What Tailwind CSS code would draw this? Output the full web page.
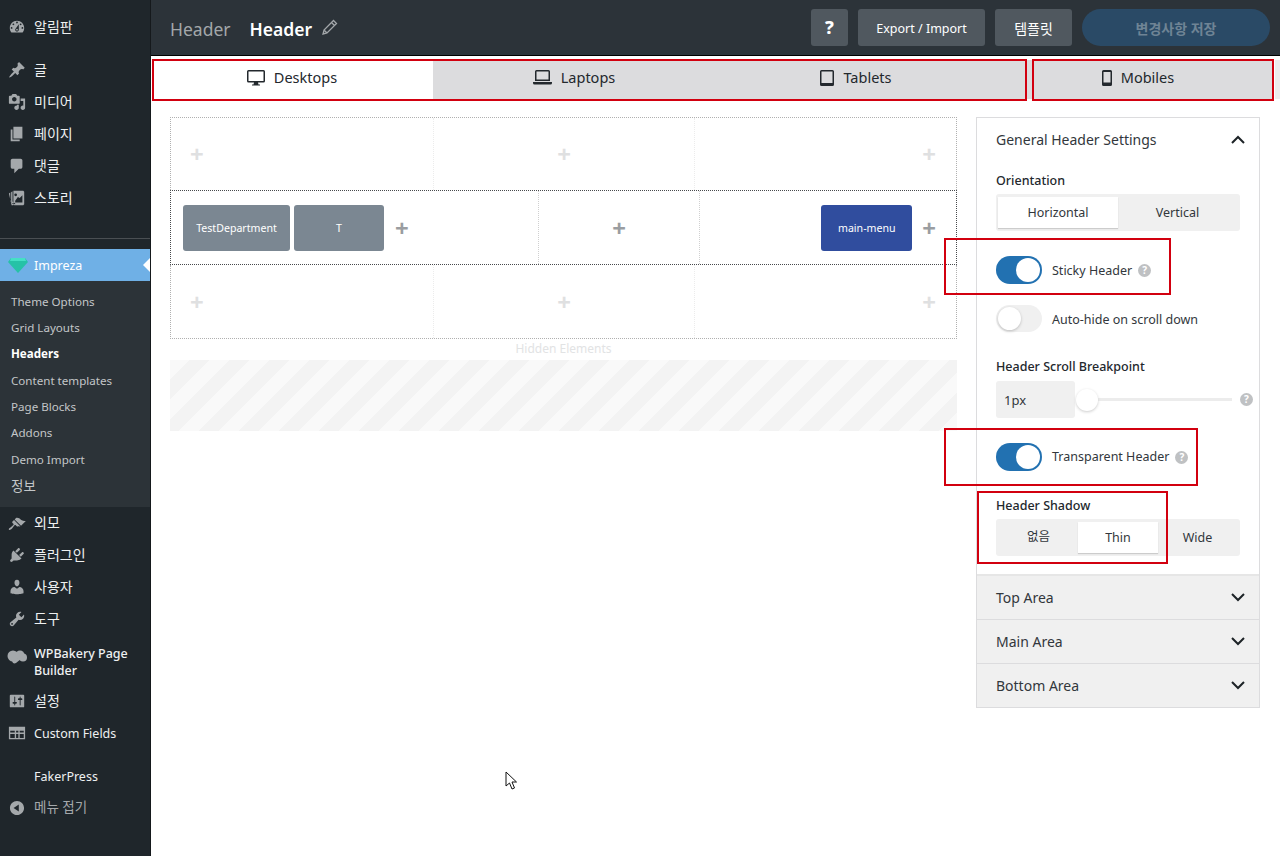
<!DOCTYPE html>
<html lang="ko">
<head>
    <meta charset="UTF-8">
    <title>Header</title>
    <script src="https://cdn.jsdelivr.net/npm/@tailwindcss/browser@4"></script>
</head>
<body class="font-['Noto_Sans','Noto_Sans_CJK_KR',sans-serif] bg-white">
<div class="relative flex w-[1280px] h-[856px] overflow-hidden">

    <!-- admin sidebar -->
    <aside class="w-[150px] shrink-0 bg-[#1f262b] text-[14px] text-[#eef0f1] border-r border-[#15191c] box-content">
        <div class="h-[11px]"></div>
        <a class="flex items-center h-[32px] pl-[8px] gap-[8px]"><svg class="w-[18px] h-[18px] fill-[#a4a8ab]" viewBox="0 0 20 20"><path d="M3.76 16h12.48c1.1-1.37 1.76-3.11 1.76-5 0-4.42-3.58-8-8-8s-8 3.58-8 8c0 1.89.66 3.63 1.76 5zM10 4c.55 0 1 .45 1 1s-.45 1-1 1-1-.45-1-1 .45-1 1-1zM6 6c.55 0 1 .45 1 1s-.45 1-1 1-1-.45-1-1 .45-1 1-1zm8 0c.55 0 1 .45 1 1s-.45 1-1 1-1-.45-1-1 .45-1 1-1zm-5.37 5.55L12 7v6c0 1.1-.9 2-2 2s-2-.9-2-2c0-.57.24-1.08.63-1.45zM4 10c.55 0 1 .45 1 1s-.45 1-1 1-1-.45-1-1 .45-1 1-1zm12 0c.55 0 1 .45 1 1s-.45 1-1 1-1-.45-1-1 .45-1 1-1zm-5 3c0-.55-.45-1-1-1s-1 .45-1 1 .45 1 1 1 1-.45 1-1z"/></svg><span class="pb-[2px]">알림판</span></a>
        <div class="h-[11px]"></div>
        <a class="flex items-center h-[32px] pl-[8px] gap-[8px]"><svg class="w-[18px] h-[18px] fill-[#a4a8ab]" viewBox="0 0 20 20"><path d="M10.44 3.02l1.82-1.82 6.36 6.35-1.83 1.82c-1.05-.68-2.48-.57-3.41.36l-.75.75c-.92.93-1.04 2.35-.35 3.41l-1.83 1.82-2.41-2.41-2.8 2.79c-.42.42-3.38 2.71-3.8 2.29s1.86-3.39 2.28-3.81l2.79-2.79L4.1 9.36l1.83-1.82c1.05.69 2.48.57 3.4-.36l.75-.75c.93-.92 1.05-2.35.36-3.41z"/></svg><span class="pb-[2px]">글</span></a>
        <a class="flex items-center h-[32px] pl-[8px] gap-[8px]"><svg class="w-[18px] h-[18px] fill-[#a4a8ab]" viewBox="0 0 20 20"><path d="M13 11V4c0-.55-.45-1-1-1h-1.67L9 1H5L3.67 3H2c-.55 0-1 .45-1 1v7c0 .55.45 1 1 1h10c.55 0 1-.45 1-1zM7 4.5c1.38 0 2.5 1.12 2.5 2.5S8.38 9.5 7 9.5 4.5 8.38 4.5 7 5.62 4.5 7 4.5zM14 6h5v10.5c0 1.38-1.12 2.5-2.5 2.5S14 17.88 14 16.5s1.12-2.5 2.5-2.5c.17 0 .34.02.5.05V9h-3V6zm-4 8.05V13h2v3.5c0 1.38-1.12 2.5-2.5 2.5S7 17.88 7 16.5 8.12 14 9.5 14c.17 0 .34.02.5.05z"/></svg><span class="pb-[2px]">미디어</span></a>
        <a class="flex items-center h-[32px] pl-[8px] gap-[8px]"><svg class="w-[18px] h-[18px] fill-[#a4a8ab]" viewBox="0 0 20 20"><path d="M6 15V2h10v13H6zm-1 1h8v2H3V5h2v11z"/></svg><span class="pb-[2px]">페이지</span></a>
        <a class="flex items-center h-[32px] pl-[8px] gap-[8px]"><svg class="w-[18px] h-[18px] fill-[#a4a8ab]" viewBox="0 0 20 20"><path d="M5 2h9c1.1 0 2 .9 2 2v7c0 1.1-.9 2-2 2h-2l-5 5v-5H5c-1.1 0-2-.9-2-2V4c0-1.1.9-2 2-2z"/></svg><span class="pb-[2px]">댓글</span></a>
        <a class="flex items-center h-[32px] pl-[8px] gap-[8px]"><svg class="w-[18px] h-[18px] fill-[#a4a8ab]" viewBox="0 0 20 20"><path fill-rule="evenodd" d="M1 5l1.500-1v10L6 16.500V18H4zM3.500 3.500l1.500-1v11.500l3 2v1l-3-.500-1.500-1.500zM6 2h11l1 1v14l-1 1H7l-1-1zM8.500 5a1.500 1.500 0 1 0 0 3 1.500 1.500 0 0 0 0-3zM16 7l-3 3-2-1-3 4v2h8z"/></svg><span class="pb-[2px]">스토리</span></a>

        <div class="h-[24px]"></div>
        <div class="h-px bg-[#4a4f53]"></div>
        <div class="h-[10px]"></div>

        <a class="relative flex items-center h-[32px] pl-[8px] gap-[8px] bg-[#6fb0e6] text-white"><svg class="w-[20px] h-[18px]" viewBox="0 0 20 18"><path d="M3 2h14l3 4-10 11L0 6z" fill="#26c2a7"/><path d="M3 2h14l1 3H2z" fill="#45e0c5"/></svg><span class="-ml-[2px] pt-[2px] text-[12.500px]">Impreza</span><span class="absolute right-0 top-[9px] border-y-[7px] border-y-transparent border-r-[7px] border-r-white"></span></a>
        <div class="bg-[#2c3338] h-[226px] pt-[7px] text-[11.600px] text-[#c3c6c8]">
            <a class="flex items-center h-[26.400px] pl-[11px]">Theme Options</a>
            <a class="flex items-center h-[26.400px] pl-[11px]">Grid Layouts</a>
            <a class="flex items-center h-[26.400px] pl-[11px] font-bold text-white">Headers</a>
            <a class="flex items-center h-[26.400px] pl-[11px]">Content templates</a>
            <a class="flex items-center h-[26.400px] pl-[11px]">Page Blocks</a>
            <a class="flex items-center h-[26.400px] pl-[11px]">Addons</a>
            <a class="flex items-center h-[26.400px] pl-[11px]">Demo Import</a>
            <a class="flex items-center h-[26.400px] pl-[11px] text-[13.500px]">정보</a>
        </div>

        <a class="flex items-center h-[32px] pl-[8px] gap-[8px]"><svg class="w-[18px] h-[18px] fill-[#a4a8ab]" viewBox="0 0 20 20"><path d="M14.480 11.060L7.410 3.990l1.500-1.500c.5-.56 2.300-.47 3.510.32 1.210.8 1.430 1.280 2.910 2.100 1.180.64 2.450 1.260 4.450.85zm-.71.71L6.700 4.700 4.930 6.470c-.39.39-.39 1.020 0 1.410l1.060 1.060c.39.39.39 1.030 0 1.420-.6.6-1.430 1.110-2.210 1.690-.35.26-.7.53-1.010.84C1.430 13.230.4 14.850 1.080 15.530c.68.68 2.300-.35 3.640-1.700.31-.31.58-.66.84-1.010.58-.78 1.090-1.610 1.690-2.210.39-.39 1.020-.39 1.410 0l1.060 1.060c.39.39 1.020.39 1.410 0z" transform="translate(0 2)"/></svg><span class="pb-[2px]">외모</span></a>
        <a class="flex items-center h-[32px] pl-[8px] gap-[8px]"><svg class="w-[18px] h-[18px] fill-[#a4a8ab]" viewBox="0 0 20 20"><path d="M13.110 4.360L9.870 7.600 8 5.730l3.240-3.240c.35-.34 1.050-.2 1.560.32.52.51.66 1.210.31 1.550zm-8 1.770l.91-1.120 9.010 9.010-1.190.84c-.71.71-2.630 1.160-3.820 1.160H6.140L4.900 17.260c-.59.59-1.540.59-2.120 0-.59-.58-.59-1.530 0-2.120l1.240-1.240v-3.880c0-1.130.4-3.190 1.090-3.890zm7.260 3.970l3.240-3.240c.34-.35 1.040-.21 1.550.31.52.51.66 1.210.31 1.550l-3.240 3.250z"/></svg><span class="pb-[2px]">플러그인</span></a>
        <a class="flex items-center h-[32px] pl-[8px] gap-[8px]"><svg class="w-[18px] h-[18px] fill-[#a4a8ab]" viewBox="0 0 20 20"><path d="M10 9.250c-2.270 0-2.730-3.440-2.730-3.440C7 4.020 7.820 2 9.970 2c2.160 0 2.980 2.020 2.710 3.810 0 0-.41 3.440-2.680 3.440zm0 2.570L12.720 10c2.390 0 4.520 2.330 4.520 4.530v2.490s-3.650 1.130-7.240 1.130c-3.650 0-7.240-1.130-7.240-1.130v-2.490c0-2.250 1.940-4.480 4.470-4.480z"/></svg><span class="pb-[2px]">사용자</span></a>
        <a class="flex items-center h-[32px] pl-[8px] gap-[8px]"><svg class="w-[18px] h-[18px] fill-[#a4a8ab]" viewBox="0 0 20 20"><path d="M16.680 9.770c-1.340 1.340-3.300 1.670-4.950.99l-5.410 6.520c-.99.99-2.590.99-3.580 0s-.99-2.590 0-3.570l6.520-5.420c-.68-1.650-.35-3.610.99-4.950 1.280-1.280 3.120-1.620 4.720-1.060l-2.890 2.890 2.820 2.820 2.860-2.870c.53 1.580.18 3.390-1.080 4.650zM3.810 16.210c.4.39 1.040.39 1.430 0 .4-.4.4-1.040 0-1.430-.39-.4-1.030-.4-1.430 0-.39.39-.39 1.030 0 1.430z"/></svg><span class="pb-[2px]">도구</span></a>
        <a class="flex items-center h-[50px] pl-[7px] gap-[7px] leading-[17px]"><svg class="w-[20px] h-[16px] fill-[#a4a8ab] -mt-[6px]" viewBox="0 0 20 16"><circle cx="6" cy="7" r="5.500"/><circle cx="13" cy="6" r="4.500"/><circle cx="16" cy="8.500" r="4"/><path d="M4 10h10l-5 4c-1 .5-2 .5-3 0z"/></svg><span class="w-[100px] pt-[4px] text-[12.500px] font-medium">WPBakery Page Builder</span></a>
        <a class="flex items-center h-[32px] pl-[8px] gap-[8px]"><svg class="w-[18px] h-[18px] fill-[#a4a8ab]" viewBox="0 0 20 20"><path d="M18 16V4c0-.55-.45-1-1-1H3c-.55 0-1 .45-1 1v12c0 .55.45 1 1 1h14c.55 0 1-.45 1-1zM8 11h1c.55 0 1 .45 1 1s-.45 1-1 1H8v1.500c0 .28-.22.5-.5.5s-.5-.22-.5-.5V13H6c-.55 0-1-.45-1-1s.45-1 1-1h1V5.500c0-.28.22-.5.5-.5s.5.22.5.5V11zm5-2h-1c-.55 0-1-.45-1-1s.45-1 1-1h1V5.500c0-.28.22-.5.5-.5s.5.22.5.5V7h1c.55 0 1 .45 1 1s-.45 1-1 1h-1v5.500c0 .28-.22.5-.5.5s-.5-.22-.5-.5V9z"/></svg><span class="pb-[2px]">설정</span></a>
        <a class="flex items-center h-[32px] pl-[8px] gap-[8px]"><svg class="w-[18px] h-[18px] fill-[#a4a8ab]" viewBox="0 0 20 20"><path fill-rule="evenodd" d="M1 3h18v14H1zM2.500 7.500v2h5v-2zM9 7.500v2h2.500v-2zM13 7.500v2h4.500v-2zM2.500 11v4.500h5V11zM9 11v4.500h2.500V11zM13 11v4.500h4.500V11z"/></svg><span class="pt-[2px] text-[12.500px]">Custom Fields</span></a>
        <div class="h-[11px]"></div>
        <a class="flex items-center h-[32px] pl-[34px] pt-[2px] text-[12.500px]">FakerPress</a>
        <a class="flex items-center h-[32px] pl-[8px] gap-[8px] text-[#a4a8ab]"><svg class="w-[18px] h-[18px] fill-[#a4a8ab]" viewBox="0 0 20 20"><path d="M10 2.160c4.330 0 7.840 3.510 7.840 7.840s-3.510 7.840-7.840 7.840S2.160 14.330 2.160 10 5.710 2.160 10 2.160zm2 11.720V6.120L6.180 9.970z"/></svg><span class="pb-[2px] text-[13.500px]">메뉴 접기</span></a>
    </aside>

    <main class="flex-1 min-w-0 flex flex-col">
        <!-- top bar -->
        <header class="h-[56px] shrink-0 bg-[#2c3339] border-b border-black flex items-center pl-[19px] pr-[10px]">
            <span class="text-[17.500px] text-[#a3a7aa] pt-[3px]">Header</span>
            <span class="ml-[19px] text-[17.500px] font-semibold text-white pt-[3px]">Header</span>
            <svg class="ml-[10px] mb-[1px] w-[16px] h-[16px] fill-none stroke-[#a3a7aa] stroke-[1.300]" viewBox="0 0 16 16"><path d="M11.500 1.500l3 3-9.500 9.500-4 1 1-4zM9.500 3.500l3 3M2 11l3 3"/></svg>
            <div class="ml-auto flex items-center gap-[10px] h-[38px]">
                <button class="w-[37px] h-[37px] rounded-[3px] bg-[#50585f] text-white font-extrabold text-[18px]">?</button>
                <button class="w-[127px] h-[37px] rounded-[3px] bg-[#50585f] text-white text-[12.500px] pt-[4px]">Export / Import</button>
                <button class="w-[77px] h-[37px] rounded-[3px] bg-[#50585f] text-white text-[14px] pt-[2px]">템플릿</button>
                <button class="w-[188px] h-[37px] rounded-full bg-[#2a4a66] text-[#6f8495] text-[14px] font-bold pt-[2px]">변경사항 저장</button>
            </div>
        </header>

        <!-- screen tabs -->
        <div class="flex mt-[4px] h-[39px] text-[14.500px] text-[#23282d]">
            <div class="w-[282px] pb-[4px] flex items-center justify-center gap-[9px] bg-white"><svg class="w-[18px] h-[16px] fill-[#23282d]" viewBox="0 0 18 16"><path fill-rule="evenodd" d="M1.500 0h15A1.500 1.500 0 0 1 18 1.500v9.500a1.500 1.500 0 0 1-1.500 1.500H11l.5 2H13v1H5v-1h1.500l.5-2H1.500A1.500 1.500 0 0 1 0 11V1.500A1.500 1.500 0 0 1 1.500 0zM1.500 1.500V11h15V1.500z"/></svg>Desktops</div>
            <div class="w-[282px] pb-[4px] bg-[#dcdcde] flex items-center justify-center gap-[9px]"><svg class="w-[19px] h-[15px] fill-[#23282d]" viewBox="0 0 19 15"><path fill-rule="evenodd" d="M3.500 0h12A1.500 1.500 0 0 1 17 1.500V11H2V1.500A1.500 1.500 0 0 1 3.500 0zM3.500 1.500V9.500h12V1.500zM0 12h19v1a1.500 1.500 0 0 1-1.500 1.500h-16A1.500 1.500 0 0 1 0 13z"/></svg>Laptops</div>
            <div class="w-[282px] pb-[4px] bg-[#dcdcde] flex items-center justify-center gap-[9px]"><svg class="w-[14px] h-[16px] fill-[#23282d]" viewBox="0 0 14 16"><path fill-rule="evenodd" d="M1.500 0h11A1.500 1.500 0 0 1 14 1.500v13a1.500 1.500 0 0 1-1.500 1.500h-11A1.500 1.500 0 0 1 0 14.500v-13A1.500 1.500 0 0 1 1.500 0zM1.500 1.500V13h11V1.500z"/></svg>Tablets</div>
            <div class="w-[276px] pb-[4px] pl-[6px] bg-[#dcdcde] flex items-center justify-center gap-[9px]"><svg class="w-[10px] h-[16px] fill-[#23282d]" viewBox="0 0 10 16"><path fill-rule="evenodd" d="M1.500 0h7A1.500 1.500 0 0 1 10 1.500v13A1.500 1.500 0 0 1 8.500 16h-7A1.500 1.500 0 0 1 0 14.500v-13A1.500 1.500 0 0 1 1.500 0zM1.500 2v10.500h7V2z"/></svg>Mobiles</div>
            <div class="flex-1 ml-[2px] bg-[#ececec]"></div>
        </div>

        <div class="flex mt-[18px] pl-[19px]">
            <!-- header builder -->
            <section class="w-[787px] shrink-0">
                <div class="grid grid-cols-[263px_261px_1fr] h-[73px] border border-b-0 border-dotted border-[#b0b0b0] text-[#dfe0e1]">
                    <div class="flex items-center pl-[19px] border-r border-dotted border-[#ececec]"><span class="text-[24px] font-bold leading-none">+</span></div>
                    <div class="flex items-center justify-center border-r border-dotted border-[#ececec]"><span class="text-[24px] font-bold leading-none">+</span></div>
                    <div class="flex items-center justify-end pr-[20px]"><span class="text-[24px] font-bold leading-none">+</span></div>
                </div>
                <div class="grid grid-cols-[368px_161px_1fr] h-[75px] border border-dotted border-[#47494c] text-[#9a9da1]">
                    <div class="flex items-center pl-[12px] gap-[4px] border-r border-dotted border-[#d0d0d0]">
                        <span class="w-[107px] h-[46px] pt-[3px] rounded-[3px] bg-[#7b8792] text-white text-[10.600px] flex items-center justify-center">TestDepartment</span>
                        <span class="w-[90px] h-[46px] pt-[3px] rounded-[3px] bg-[#7b8792] text-white text-[10.600px] flex items-center justify-center">T</span>
                        <span class="ml-[7px] text-[24px] font-bold leading-none">+</span>
                    </div>
                    <div class="flex items-center justify-center border-r border-dotted border-[#d0d0d0]"><span class="text-[24px] font-bold leading-none">+</span></div>
                    <div class="flex items-center justify-end pr-[20px] gap-[10px]">
                        <span class="w-[91px] h-[46px] pt-[3px] rounded-[3px] bg-[#304d9e] text-white text-[10.600px] flex items-center justify-center">main-menu</span>
                        <span class="text-[24px] font-bold leading-none">+</span>
                    </div>
                </div>
                <div class="grid grid-cols-[263px_261px_1fr] h-[74px] border border-t-0 border-dotted border-[#b0b0b0] text-[#dfe0e1]">
                    <div class="flex items-center pl-[19px] border-r border-dotted border-[#ececec]"><span class="text-[24px] font-bold leading-none">+</span></div>
                    <div class="flex items-center justify-center border-r border-dotted border-[#ececec]"><span class="text-[24px] font-bold leading-none">+</span></div>
                    <div class="flex items-center justify-end pr-[20px]"><span class="text-[24px] font-bold leading-none">+</span></div>
                </div>
                <div class="h-[21px] pb-[1px] flex items-center justify-center text-[12px] text-[#e2e3e4]">Hidden Elements</div>
                <div class="h-[71px] bg-[repeating-linear-gradient(135deg,#f9f9f9_0,#f9f9f9_14.140px,#f3f3f3_14.140px,#f3f3f3_28.280px)]"></div>
            </section>

            <!-- settings panel -->
            <section class="ml-[19px] w-[284px] h-[591px] border border-[#dcdcde] text-[#32373c]">
                <div class="h-[43px] flex items-center justify-between pl-[19px] pr-[14px] text-[14px]">General Header Settings
                    <svg class="w-[14px] h-[9px] stroke-[#1d2327] fill-none stroke-2" viewBox="0 0 14 9"><path d="M1 8l6-6 6 6"/></svg>
                </div>
                <div class="pl-[19px] pr-[19px]">
                    <div class="mt-[10px] text-[12.500px] font-medium leading-[20px] text-[#23282d]">Orientation</div>
                    <div class="mt-[3px] flex h-[37px] w-[244px] rounded-[3px] bg-[#f0f0f0] p-[3px] text-[12.500px]">
                        <span class="w-[120px] -ml-[1px] pt-[2px] bg-white shadow-[0_1px_1px_#ccc] flex items-center justify-center">Horizontal</span>
                        <span class="flex-1 pt-[2px] flex items-center justify-center">Vertical</span>
                    </div>
                    <div class="mt-[25px] flex items-center h-[28px] text-[12.500px]">
                        <span class="w-[46px] h-[28px] rounded-full bg-[#2271b1] flex items-center justify-end pr-[2px]"><span class="w-[24px] h-[24px] rounded-full bg-white"></span></span>
                        <span class="ml-[10px] pt-[2px]">Sticky Header</span>
                        <span class="ml-[6px] w-[13px] h-[13px] rounded-full bg-[#bfc1c3] text-white text-[10px] font-bold flex items-center justify-center">?</span>
                    </div>
                    <div class="mt-[21px] flex items-center h-[27px] text-[12.500px]">
                        <span class="w-[46px] h-[27px] rounded-full bg-[#f0f0f0] flex items-center pl-[2px]"><span class="w-[23px] h-[23px] rounded-full bg-white shadow-[0_1px_3px_#bbb]"></span></span>
                        <span class="ml-[10px] pt-[4px]">Auto-hide on scroll down</span>
                    </div>
                    <div class="mt-[25px] text-[12.500px] font-medium leading-[20px] text-[#23282d]">Header Scroll Breakpoint</div>
                    <div class="mt-[4px] flex items-center h-[37px]">
                        <span class="w-[79px] h-[37px] rounded-[3px] bg-[#f0f0f0] flex items-center pl-[8px] pt-[2px] text-[13px]">1px</span>
                        <span class="relative flex-1 flex items-center">
                            <span class="w-[156px] ml-[1px] h-[3px] bg-[#ececec]"></span>
                            <span class="absolute left-[1px] w-[22px] h-[22px] rounded-full bg-white shadow-[0_1px_3px_#ccc]"></span>
                        </span>
                        <span class="mr-[-13px] w-[13px] h-[13px] rounded-full bg-[#bfc1c3] text-white text-[10px] font-bold flex items-center justify-center">?</span>
                    </div>
                    <div class="mt-[25px] flex items-center h-[28px] text-[12.500px]">
                        <span class="w-[46px] h-[28px] rounded-full bg-[#2271b1] flex items-center justify-end pr-[2px]"><span class="w-[24px] h-[24px] rounded-full bg-white"></span></span>
                        <span class="ml-[10px]">Transparent Header</span>
                        <span class="ml-[6px] w-[13px] h-[13px] rounded-full bg-[#bfc1c3] text-white text-[10px] font-bold flex items-center justify-center">?</span>
                    </div>
                    <div class="mt-[25px] text-[12.500px] font-medium leading-[20px] text-[#23282d]">Header Shadow</div>
                    <div class="mt-[3px] flex h-[37px] w-[244px] rounded-[3px] bg-[#f0f0f0] p-[3px] text-[12.500px]">
                        <span class="w-[79px] flex items-center justify-center">없음</span>
                        <span class="w-[80px] pt-[2px] bg-white shadow-[0_1px_1px_#ccc] flex items-center justify-center">Thin</span>
                        <span class="flex-1 pt-[2px] flex items-center justify-center">Wide</span>
                    </div>
                </div>
                <div class="mt-[18px] border-t-2 border-[#e6e6e6] h-[45px] bg-[#f0f0f0] flex items-center justify-between pl-[19px] pr-[14px] text-[14px]">Top Area
                    <svg class="w-[14px] h-[9px] stroke-[#1d2327] fill-none stroke-2" viewBox="0 0 14 9"><path d="M1 1l6 6 6-6"/></svg>
                </div>
                <div class="border-t border-[#dcdcde] h-[44px] bg-[#f0f0f0] flex items-center justify-between pl-[19px] pr-[14px] text-[14px]">Main Area
                    <svg class="w-[14px] h-[9px] stroke-[#1d2327] fill-none stroke-2" viewBox="0 0 14 9"><path d="M1 1l6 6 6-6"/></svg>
                </div>
                <div class="border-t border-[#dcdcde] h-[44px] bg-[#f0f0f0] flex items-center justify-between pl-[19px] pr-[14px] text-[14px]">Bottom Area
                    <svg class="w-[14px] h-[9px] stroke-[#1d2327] fill-none stroke-2" viewBox="0 0 14 9"><path d="M1 1l6 6 6-6"/></svg>
                </div>
            </section>
        </div>
    </main>

    <!-- red annotation boxes drawn on top of the screenshot -->
    <div class="absolute left-[152px] top-[59px] w-[875px] h-[42px] border-2 border-[#d2000f]"></div>
    <div class="absolute left-[1032px] top-[59px] w-[242px] h-[42px] border-2 border-[#d2000f]"></div>
    <div class="absolute left-[944px] top-[238px] w-[227px] h-[57px] border-2 border-[#d2000f]"></div>
    <div class="absolute left-[944px] top-[428px] w-[254px] h-[58px] border-2 border-[#d2000f]"></div>
    <div class="absolute left-[977px] top-[491px] w-[191px] h-[73px] border-2 border-[#d2000f]"></div>

    <!-- mouse pointer -->
    <svg class="absolute left-[505px] top-[771px] w-[13px] h-[19px]" viewBox="0 0 13 19"><path d="M1 1v14l3.500-3 2.500 6 2.500-1-2.500-6h4.500z" fill="#fff" stroke="#111" stroke-width="1"/></svg>
</div>
</body>
</html>
